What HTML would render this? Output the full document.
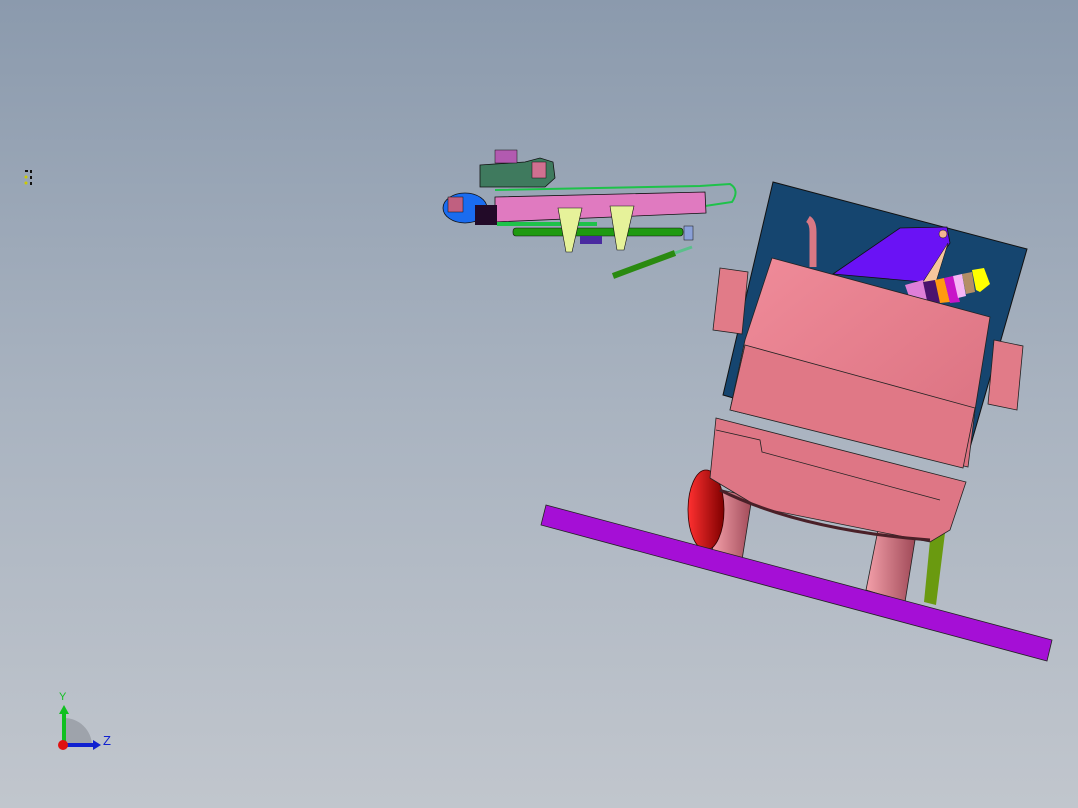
<!DOCTYPE html>
<html><head><meta charset="utf-8"><style>
html,body{margin:0;padding:0;width:1078px;height:808px;overflow:hidden}
body{background:linear-gradient(#8b9aad 0%,#a9b3c0 50%,#c1c6cd 100%)}
svg{position:absolute;left:0;top:0}
</style></head><body>
<svg width="1078" height="808" viewBox="0 0 1078 808" xmlns="http://www.w3.org/2000/svg">
<defs>
<linearGradient id="pk" x1="0" y1="0" x2="1" y2="1"><stop offset="0" stop-color="#f08c9a"/><stop offset="1" stop-color="#d9707f"/></linearGradient>
<linearGradient id="rd" x1="0" y1="0" x2="1" y2="0"><stop offset="0" stop-color="#ff3030"/><stop offset="1" stop-color="#800000"/></linearGradient>
<linearGradient id="lg" x1="0" y1="0" x2="1" y2="0"><stop offset="0" stop-color="#f4a0aa"/><stop offset="1" stop-color="#a04a58"/></linearGradient>
</defs>
<g fill="#111"><rect x="25" y="170" width="3" height="2"/><rect x="30" y="170" width="2" height="3"/><circle cx="26" cy="177" r="1.5" fill="#cc0"/><rect x="30" y="176" width="2" height="3"/><circle cx="26" cy="183" r="1.5" fill="#cc0"/><rect x="30" y="182" width="2" height="3"/></g>

<polygon points="773,182 1027,249 965,465 723,395" fill="#15456f" stroke="#111" stroke-width="1"/>
<polygon points="900,228 947,227 950,243 923,282 833,274" fill="#6a12f5" stroke="#111" stroke-width="0.8"/>
<circle cx="943" cy="234" r="4" fill="#f3b592" stroke="#111" stroke-width="0.5"/>
<polygon points="948,243 923,282 935,285" fill="#f7c69c" stroke="#111" stroke-width="0.5"/>
<polygon points="905,285 923,280 930,300 912,305" fill="#df7fd8"/>
<polygon points="923,282 935,280 940,302 928,305" fill="#4a136e"/>
<polygon points="935,280 944,278 950,302 940,303" fill="#ff9a10"/>
<polygon points="944,278 953,276 960,302 950,303" fill="#c815c8"/>
<polygon points="953,276 962,274 966,296 958,298" fill="#f6b6f6"/>
<polygon points="962,274 972,272 975,292 966,294" fill="#b48e66"/>
<polygon points="972,270 984,268 990,284 980,292 976,290" fill="#ffff00"/>
<path d="M813,267 L813,232 Q813,222 808,219" stroke="#d97884" stroke-width="7" fill="none"/>
<polygon points="720,268 748,272 742,334 713,330" fill="#e17b88" stroke="#222" stroke-width="0.8"/>
<polygon points="994,340 1023,346 1017,410 988,404" fill="#e17b88" stroke="#222" stroke-width="0.8"/>
<polygon points="722,490 752,497 742,560 712,552" fill="url(#lg)" stroke="#222" stroke-width="0.8"/>
<polygon points="878,530 915,540 905,602 866,590" fill="url(#lg)" stroke="#222" stroke-width="0.8"/>
<polygon points="932,520 946,525 936,605 924,602" fill="#6a9a10"/>
<ellipse cx="706" cy="510" rx="18" ry="40" fill="url(#rd)" stroke="#300" stroke-width="0.8"/>
<polygon points="772,258 990,317 975,410 968,467 730,410 745,340" fill="url(#pk)" stroke="#222" stroke-width="0.8"/>
<polygon points="745,345 975,408 963,468 730,410" fill="#e07886" stroke="#222" stroke-width="0.8"/>
<polygon points="716,418 966,482 950,530 930,542 760,508 710,478" fill="#de7685" stroke="#222" stroke-width="0.8"/>
<path d="M716,430 L760,440 L762,452 L940,500" stroke="#222" stroke-width="0.8" fill="none"/>
<path d="M720,490 Q800,530 930,540" stroke="#4a2028" stroke-width="3" fill="none"/>
<polygon points="546,505 1052,640 1047,661 541,525" fill="#a50fd6" stroke="#222" stroke-width="0.8"/>

<path d="M495,190 L700,186 L730,184 Q740,190 732,202 L705,206" stroke="#1ec24a" stroke-width="2" fill="none"/>
<polygon points="480,165 525,162 540,158 553,162 555,178 545,187 480,187" fill="#3f7a5e" stroke="#111" stroke-width="0.8"/>
<rect x="532" y="162" width="14" height="16" fill="#d07090" stroke="#111" stroke-width="0.5"/>
<rect x="495" y="150" width="22" height="13" fill="#b25ab0" stroke="#111" stroke-width="0.5"/>
<ellipse cx="465" cy="208" rx="22" ry="15" fill="#1a6cf0" stroke="#111" stroke-width="0.8"/>
<rect x="448" y="197" width="15" height="15" fill="#c06080" stroke="#111" stroke-width="0.5"/>
<polygon points="495,197 705,192 706,213 495,222" fill="#e07ac0" stroke="#111" stroke-width="0.8"/>
<rect x="475" y="205" width="22" height="20" fill="#220a28"/>
<rect x="497" y="222" width="100" height="4" fill="#1ec24a"/>
<rect x="513" y="228" width="170" height="8" rx="3" fill="#1f9a10" stroke="#111" stroke-width="0.6"/>
<polygon points="558,208 582,208 572,252 566,252" fill="#e6f29a" stroke="#111" stroke-width="0.6"/>
<polygon points="610,206 634,206 624,250 617,250" fill="#e6f29a" stroke="#111" stroke-width="0.6"/>
<rect x="580" y="236" width="22" height="8" fill="#4a2aa0"/>
<rect x="684" y="226" width="9" height="14" fill="#8aa0d8" stroke="#111" stroke-width="0.5"/>
<line x1="613" y1="276" x2="675" y2="253" stroke="#2a8a10" stroke-width="6"/>
<line x1="675" y1="253" x2="692" y2="247" stroke="#5ac08a" stroke-width="3"/>

<path d="M64,745 L64,718 A28,28 0 0 1 92,745 Z" fill="#9ea3ab"/>
<line x1="64" y1="745" x2="64" y2="712" stroke="#10c020" stroke-width="4"/>
<polygon points="59,714 69,714 64,705" fill="#10c020"/>
<line x1="64" y1="745" x2="94" y2="745" stroke="#1020d0" stroke-width="4"/>
<polygon points="93,740 93,750 101,745" fill="#1020d0"/>
<circle cx="63" cy="745" r="5" fill="#e01010"/>
<text x="59" y="700" font-family="Liberation Sans, sans-serif" font-size="11" fill="#10c020">Y</text>
<text x="103" y="745" font-family="Liberation Sans, sans-serif" font-size="13" fill="#1020d0">Z</text>
</svg>
</body></html>
